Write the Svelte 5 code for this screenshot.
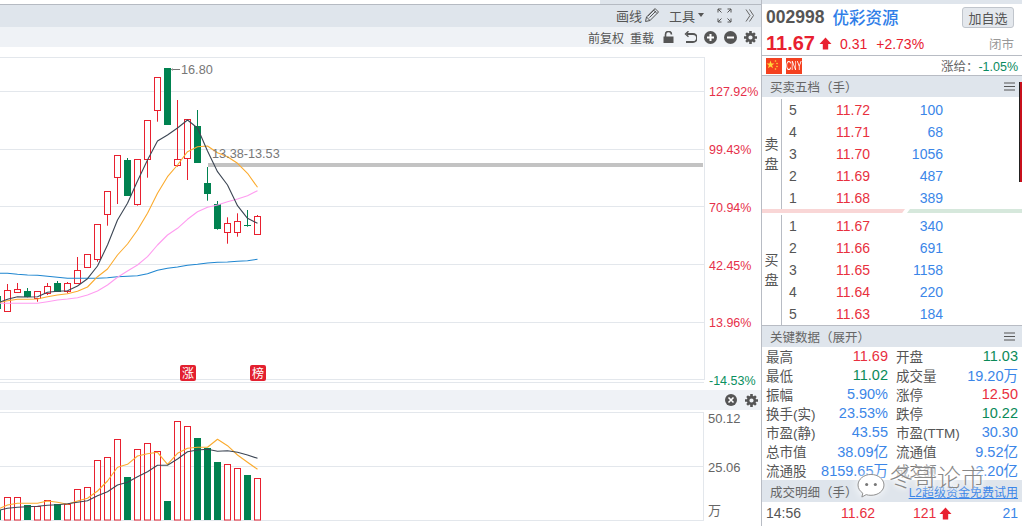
<script>
  const xAt = (i) => 7.5 + 10 * i;
  // keeps 1px outlines on whole pixels
  const snap = (y) => Math.floor(y) + 0.5;

  // open/close as body top+bottom, wick top+bottom; up candles are hollow red
  const candles = [
    [0, 290.3, 311.3, 284, 311.3], [0, 289.3, 292.7, 283, 292.7], [1, 291, 297.3, 288, 297.3],
    [0, 291.3, 298.7, 291.3, 301.7], [0, 286.3, 293.3, 283, 295], [1, 283, 291.7, 281, 291.7],
    [0, 283.3, 291.3, 282, 293.3], [0, 270.3, 283.3, 257, 283.3], [0, 254.3, 267.3, 254.3, 267.3],
    [0, 224.3, 259.3, 224.3, 261.7], [0, 191.3, 214.3, 191.3, 225.7], [0, 155.3, 177.3, 155.3, 204],
    [1, 160, 195.7, 158, 195.7], [0, 159.3, 204.3, 159.3, 205.7], [0, 120.3, 159.3, 120.3, 177.7],
    [0, 77.3, 110.3, 77.3, 121.7], [1, 68, 125, 68, 125], [0, 159.3, 165.3, 100, 166.7],
    [0, 119.3, 158.3, 119.3, 180], [1, 126, 162.7, 110, 162.7], [1, 183, 193.7, 167, 200.7],
    [1, 204.3, 229.7, 201, 229.7], [0, 223.3, 232.3, 217.3, 243.7], [0, 221.3, 232.3, 213.3, 236.7],
    [1, 225, 226, 210, 226.7], [0, 216.3, 234.3, 215, 234.3],
  ];

  const ma5 = [299.3, 296.7, 297, 296.7, 292.3, 291.3, 290.7, 286, 278.7, 266, 245, 220, 203.3, 181, 160, 141, 135, 128, 120, 128, 151, 171.7, 185, 205.7, 218.3, 223.3];
  const ma10 = [300.7, 299.3, 299.3, 299, 296.7, 295, 293.7, 291.3, 287, 276.7, 269, 255, 244, 230, 213.3, 193.3, 176.7, 165, 151.7, 146.7, 146, 152.7, 156.7, 163.3, 173.3, 187.3];
  const ma20 = [303.3, 303.3, 303.3, 303.3, 301.7, 300, 299, 297.7, 295, 291, 285, 277.3, 271, 265, 256.7, 245, 235, 228.3, 219.3, 211.7, 207.3, 205, 201.7, 199, 195.7, 190.7];
  const ma60 = [273.3, 274.3, 275, 275.3, 276.3, 277.3, 278.3, 278.3, 278.3, 278.3, 277.7, 276.7, 276.3, 275.7, 273.7, 270.3, 268.3, 267, 265.3, 264.3, 263, 262.3, 262, 261.3, 260.7, 259.3];

  const bars = [
    [0, 497.3], [0, 497.3], [1, 505], [0, 506.7], [0, 500.3], [1, 504], [0, 504], [0, 489.3], [0, 487.3],
    [0, 460.3], [0, 457.3], [0, 439.3], [1, 477], [0, 449.3], [0, 443.3], [0, 451.3], [1, 501], [0, 421.3],
    [0, 426.3], [1, 438], [1, 448], [1, 462], [0, 464.3], [0, 468.3], [1, 475], [0, 478.3],
  ];
  const volShort = [508.3, 505, 503.3, 503.3, 503.3, 501, 502.3, 504.3, 501, 498.3, 491, 481, 467.3, 464.3, 456, 453.7, 452.3, 464.3, 453.3, 448.3, 447.3, 447.3, 439.3, 445.7, 455, 462.3, 469.3];
  const volLong = [510, 508.3, 507.3, 506.7, 506.3, 505.3, 504.7, 503.7, 502.3, 500.7, 495.7, 491.7, 485, 482.3, 476.7, 471.7, 465.3, 465.3, 459, 451.7, 450, 449.3, 451.3, 450.7, 452.3, 455, 458.3];

  function line(ys) {
    return ys.map((y, i) => `${xAt(i)},${y}`).join(" ");
  }
  // start the lines at the left edge of the chart
  const trend = (ys, first) => `0,${first} ` + line(ys);

  const percents = [
    { y: 96, text: "127.92%" }, { y: 154, text: "99.43%" }, { y: 212, text: "70.94%" },
    { y: 270, text: "42.45%" }, { y: 327, text: "13.96%" },
  ];
  const gridY = [57.5, 91.5, 149.5, 206.5, 264.5, 322.5, 379.5, 382.5];

  const sells = [
    [5, "11.72", 100], [4, "11.71", 68], [3, "11.70", 1056], [2, "11.69", 487], [1, "11.68", 389],
  ];
  const buys = [
    [1, "11.67", 340], [2, "11.66", 691], [3, "11.65", 1158], [4, "11.64", 220], [5, "11.63", 184],
  ];

  const keyData = [
    ["最高", "11.69", "red", "开盘", "11.03", "green"],
    ["最低", "11.02", "green", "成交量", "19.20万", "blue"],
    ["振幅", "5.90%", "blue", "涨停", "12.50", "red"],
    ["换手(实)", "23.53%", "blue", "跌停", "10.22", "green"],
    ["市盈(静)", "43.55", "blue", "市盈(TTM)", "30.30", "blue"],
    ["总市值", "38.09亿", "blue", "流通值", "9.52亿", "blue"],
    ["流通股", "8159.65万", "blue", "成交额", "2.20亿", "blue"],
  ];
</script>

{#snippet gear()}
  <svg class="ico" width="13" height="13" viewBox="0 0 13 13">
    <circle cx="6.5" cy="6.5" r="3.4" fill="none" stroke="#555" stroke-width="2.6" />
    <path d="M5.2 0h2.6v2.4H5.2zM5.2 10.6h2.6V13H5.2zM0 5.2h2.4v2.6H0zM10.6 5.2H13v2.6h-2.4z" fill="#555" />
    <path d="M1.2 3l1.8-1.8 1.7 1.7-1.8 1.8zM8.3 10.1l1.8-1.8 1.7 1.7-1.8 1.8zM10 1.2L11.8 3l-1.7 1.7-1.8-1.8zM3 8.3l1.7 1.8L3 11.8 1.2 10z" fill="#555" />
  </svg>
{/snippet}

{#snippet menu()}
  <svg class="menu" width="11" height="9" viewBox="0 0 11 9">
    <path d="M0 1h11M0 4.5h11M0 8h11" stroke="#555" stroke-width="1" fill="none" />
  </svg>
{/snippet}

{#snippet upArrow(color)}
  <svg width="13" height="13" viewBox="0 0 13 13"><path d="M6.5 0.5L12.5 7H9.2v5.5H3.8V7H.5z" fill={color} /></svg>
{/snippet}

<div class="page">
  <div class="left">
    <div class="top-strip"><i class="tab"></i></div>
    <div class="toolbar">
      <span>画线</span>
      <svg class="pencil" width="16" height="16" viewBox="0 0 16 16" fill="none" stroke="#555" stroke-width="1">
        <path d="M1.5 14.5l1-4.5L11 1.5l3.5 3.5L6 13.5zM2.5 10l3.5 3.5M9.5 3l3.5 3.5M4 9l6.5-6.5M5.5 10.5L12 4" />
      </svg>
      <span class="tool-label">工具</span>
      <i class="caret"></i>
      <svg class="full" width="15" height="15" viewBox="0 0 15 15" fill="none" stroke="#555" stroke-width="1">
        <path d="M1 4.5V1h3.5M1 1l3.5 3.5M14 4.5V1h-3.5M14 1l-3.5 3.5M1 10.5V14h3.5M1 14l3.5-3.5M14 10.5V14h-3.5M14 14l-3.5-3.5" />
      </svg>
      <svg class="chev" width="10" height="13" viewBox="0 0 10 13" fill="none" stroke="#666" stroke-width="1">
        <path d="M1 .5l4 6-4 6M4.5 .5l4 6-4 6" />
      </svg>
    </div>
    <div class="subbar">
      <span>前复权</span>
      <span class="reload">重载</span>
      <svg class="lock" width="11" height="12" viewBox="0 0 11 12">
        <path d="M2.5 6V3.5a3 3 0 0 1 6 0" fill="none" stroke="#555" stroke-width="1.6" />
        <path d="M.5 5.5h10V12H.5z" fill="#555" />
      </svg>
      <svg class="undo" width="13" height="12" viewBox="0 0 13 12" fill="none" stroke="#555" stroke-width="1.8">
        <path d="M3 3h6a3.5 3.5 0 0 1 0 8H2" />
        <path d="M4.5 .2L1.5 3l3 2.8" stroke-width="1.4" />
      </svg>
      <svg class="round" width="13" height="13" viewBox="0 0 13 13">
        <circle cx="6.5" cy="6.5" r="6.5" fill="#555" />
        <path d="M3 6.5h7M6.5 3v7" stroke="#fff" stroke-width="2" />
      </svg>
      <svg class="round" width="13" height="13" viewBox="0 0 13 13">
        <circle cx="6.5" cy="6.5" r="6.5" fill="#555" />
        <path d="M3 6.5h7" stroke="#fff" stroke-width="2" />
      </svg>
      <span class="gear-slot">{@render gear()}</span>
    </div>

    <svg class="chart" width="761" height="479" viewBox="0 47 761 479">
      <g stroke="#e3e7ec" stroke-width="1">
        {#each gridY as y}
          <line x1="0" x2="704" y1={y} y2={y} />
        {/each}
        <line x1="704.5" x2="704.5" y1="57" y2="380" />
        <line x1="0" x2="704" y1="412.5" y2="412.5" />
        <line x1="0" x2="704" y1="466.5" y2="466.5" />
        <line x1="0" x2="704" y1="520.5" y2="520.5" />
        <line x1="703.5" x2="703.5" y1="412" y2="521" />
      </g>

      <rect x="208" y="163" width="495" height="4" fill="#c3c3c3" />

      <rect x="0" y="296" width="1" height="13" fill="#008250" />
      {#each candles as [down, top, bottom, wickTop, wickBottom], i}
        {#if down}
          <line x1={xAt(i)} x2={xAt(i)} y1={wickTop} y2={wickBottom} stroke="#008250" />
          <rect x={xAt(i) - 3.5} y={Math.round(top)} width="7" height={Math.max(1, Math.round(bottom - top))} fill="#008250" />
        {:else}
          <line x1={xAt(i)} x2={xAt(i)} y1={wickTop} y2={top} stroke="#e8202f" />
          <line x1={xAt(i)} x2={xAt(i)} y1={bottom} y2={wickBottom} stroke="#e8202f" />
          <rect x={xAt(i) - 3} y={snap(top)} width="6" height={Math.round(bottom - top)} fill="#fff" stroke="#e8202f" />
        {/if}
      {/each}

      <polyline class="ma" points={trend(ma60, 273.3)} stroke="#1f86d0" />
      <polyline class="ma" points={trend(ma20, 303.3)} stroke="#ff9cf0" />
      <polyline class="ma" points={trend(ma10, 302.3)} stroke="#fbab2e" />
      <polyline class="ma" points={trend(ma5, 302)} stroke="#3c4654" />

      <path d="M171 69.5h9" stroke="#777" stroke-width="1" />
      <path d="M171 69.5l2-1.5v3z" fill="#999" />
      <text class="note" x="181" y="74">16.80</text>
      <text class="note" x="212" y="158">13.38-13.53</text>

      <rect class="tag" x="180" y="365" width="16" height="16" rx="2" />
      <text class="tag-text" x="188" y="377.5">涨</text>
      <rect class="tag" x="250" y="365" width="16" height="16" rx="2" />
      <text class="tag-text" x="258" y="377.5">榜</text>

      {#each percents as p}
        <text class="axis up" x="709" y={p.y}>{p.text}</text>
      {/each}
      <text class="axis down" x="709" y="385">-14.53%</text>

      <!-- volume band -->
      <rect x="0" y="390" width="761" height="20" fill="#eff2f6" />
      <circle cx="731" cy="400" r="6" fill="#555" />
      <path d="M728.5 397.5l5 5M733.5 397.5l-5 5" stroke="#fff" stroke-width="1.6" />
      <g transform="translate(745 394)">
        <circle cx="6.5" cy="6.5" r="3.4" fill="none" stroke="#555" stroke-width="2.6" />
        <path d="M5.2 0h2.6v2.4H5.2zM5.2 10.6h2.6V13H5.2zM0 5.2h2.4v2.6H0zM10.6 5.2H13v2.6h-2.4z" fill="#555" />
        <path d="M1.2 3l1.8-1.8 1.7 1.7-1.8 1.8zM8.3 10.1l1.8-1.8 1.7 1.7-1.8 1.8zM10 1.2L11.8 3l-1.7 1.7-1.8-1.8zM3 8.3l1.7 1.8L3 11.8 1.2 10z" fill="#555" />
      </g>

      <rect x="0" y="510" width="1" height="10" fill="#008250" />
      {#each bars as [down, top], i}
        {#if down}
          <rect x={xAt(i) - 3.5} y={Math.round(top)} width="7" height={520 - Math.round(top)} fill="#008250" />
        {:else}
          <rect x={xAt(i) - 3} y={snap(top)} width="6" height={520 - snap(top)} fill="#fff" stroke="#e8202f" />
        {/if}
      {/each}
      <polyline class="ma" points={trend(volShort.slice(1), volShort[0])} stroke="#fbab2e" />
      <polyline class="ma" points={trend(volLong.slice(1), volLong[0])} stroke="#3c4654" />

      <text class="axis plain" x="708" y="423">50.12</text>
      <text class="axis plain" x="708" y="472">25.06</text>
      <text class="axis plain" x="708" y="515">万</text>
    </svg>
  </div>

  <aside class="side">
    <div class="side-strip"></div>
    <div class="title-row">
      <span class="code">002998</span>
      <span class="name">优彩资源</span>
      <button class="add">加自选</button>
    </div>
    <div class="price-row">
      <span class="price">11.67</span>
      <span class="arrow">{@render upArrow("#e8202f")}</span>
      <span class="change">0.31</span>
      <span class="pct">+2.73%</span>
      <span class="closed">闭市</span>
    </div>
    <div class="tag-row">
      <svg class="flag" width="16" height="16" viewBox="0 0 16 16">
        <rect width="16" height="16" fill="#f4401f" />
        <path d="M4.5 2.5l1 3h3L6.100 7.300l.9 3-2.500-1.800-2.500 1.800.9-3L.5 5.500h3z" fill="#ffd83a" />
        <circle cx="9.5" cy="3" r=".8" fill="#ffd83a" />
        <circle cx="11" cy="5.5" r=".8" fill="#ffd83a" />
        <circle cx="11" cy="8.5" r=".8" fill="#ffd83a" />
        <circle cx="9.5" cy="11" r=".8" fill="#ffd83a" />
      </svg>
      <span class="cny"><span>CNY</span></span>
      <span class="rate">涨给：<b>-1.05%</b></span>
    </div>

    <div class="sec-head">买卖五档（手）{@render menu()}</div>
    <div class="book">
      <div class="book-side">卖<br />盘</div>
      <div class="rows">
        {#each sells as [n, price, vol]}
          <div class="row"><span class="n">{n}</span><span class="p">{price}</span><span class="v">{vol}</span></div>
        {/each}
      </div>
    </div>
    <div class="split"><i class="pink"></i><i class="mint"></i></div>
    <div class="book last">
      <div class="book-side">买<br />盘</div>
      <div class="rows">
        {#each buys as [n, price, vol]}
          <div class="row"><span class="n">{n}</span><span class="p">{price}</span><span class="v">{vol}</span></div>
        {/each}
      </div>
    </div>

    <div class="sec-head">关键数据（展开）{@render menu()}</div>
    <div class="key">
      {#each keyData as [l1, v1, c1, l2, v2, c2]}
        <span class="k">{l1}</span><span class="val {c1}">{v1}</span>
        <span class="k second">{l2}</span><span class="val {c2}">{v2}</span>
      {/each}
    </div>

    <div class="sec-head detail">成交明细（手）<a href="#l2">L2超级资金免费试用</a></div>
    <div class="trade">
      <span class="time">14:56</span>
      <span class="tp">11.62</span>
      <span class="tv">121</span>
      {@render upArrow("#e8202f")}
      <span class="tc">21</span>
    </div>

    <i class="gauge"></i>

    <div class="watermark">
      <svg width="30" height="25" viewBox="0 0 30 26">
        <path d="M15 1.5C7.5 1.5 1.5 6.5 1.5 12.5c0 3.5 2 6.5 5 8.5l-1 4 4.5-2.5c1.500.5 3 .7 5 .7 7.500 0 13.500-4.700 13.500-10.700S22.500 1.500 15 1.500z" fill="#fff" stroke="#8a8a8a" stroke-width="1" />
        <circle cx="10.5" cy="12" r="1.6" fill="#777" />
        <circle cx="19.5" cy="12" r="1.6" fill="#777" />
      </svg>
      <span>冬哥论市</span>
    </div>
  </aside>
</div>

<style>
  :global(body) {
    background: #fff;
    overflow: hidden;
  }

  .page {
    display: flex;
    width: 1022px;
    height: 526px;
    overflow: hidden;
    position: relative;
    font-family: "Liberation Sans", "Noto Sans CJK SC", sans-serif;
    color: #555;
  }

  .left {
    width: 761px;
    flex: none;
  }

  .top-strip {
    height: 4px;
    background: #dfe5ec;
    border-bottom: 1px solid #b5bac2;
  }

  .tab {
    display: block;
    width: 600px;
    height: 4px;
    background: #fff;
  }

  .toolbar {
    height: 22px;
    background: #dfe5ec;
    display: flex;
    align-items: center;
    justify-content: flex-end;
    font-size: 13px;
    padding-right: 6px;
    padding-bottom: 2px;
    box-sizing: border-box;
  }

  .pencil {
    margin-left: 2px;
  }

  .tool-label {
    margin-left: 9px;
  }

  .caret {
    width: 0;
    height: 0;
    margin-left: 3px;
    border-left: 3.5px solid transparent;
    border-right: 3.5px solid transparent;
    border-top: 4px solid #555;
  }

  .full {
    margin-left: 13px;
  }

  .chev {
    margin-left: 13px;
  }

  .subbar {
    height: 20px;
    background: #eff2f6;
    display: flex;
    align-items: center;
    justify-content: flex-end;
    font-size: 12px;
    padding-right: 4px;
    box-sizing: border-box;
  }

  .reload {
    margin-left: 6px;
  }

  .lock {
    margin-left: 9px;
  }

  .undo {
    margin-left: 10px;
  }

  .round {
    margin-left: 7px;
  }

  .gear-slot {
    margin-left: 7px;
    display: flex;
  }

  .chart {
    display: block;
  }

  .ma {
    fill: none;
    stroke-width: 1.1;
    stroke-linejoin: round;
  }

  .note {
    font-size: 12.7px;
    fill: #777;
  }

  .tag {
    fill: #e3202f;
  }

  .tag-text {
    font-size: 12px;
    fill: #fff;
    text-anchor: middle;
  }

  .axis {
    font-size: 12.5px;
  }

  .up {
    fill: #e6304a;
  }

  .down {
    fill: #0a9060;
  }

  .plain {
    fill: #666;
    font-size: 13px;
  }

  .side {
    flex: 1;
    border-left: 1px solid #b8bcc4;
    min-width: 0;
  }

  .side-strip {
    height: 4px;
    background: #dfe5ec;
  }

  .title-row {
    height: 28px;
    display: flex;
    align-items: center;
    padding: 0 8px 2px 4px;
    box-sizing: border-box;
  }

  .code {
    font-size: 17.5px;
    font-weight: 700;
    color: #555;
  }

  .name {
    font-size: 16.5px;
    font-weight: 500;
    color: #2f7ee8;
    margin-left: 8px;
  }

  .add {
    margin-left: auto;
    width: 52px;
    height: 21px;
    padding: 0;
    background: #e4e8ed;
    border: 1px solid #c0c5cc;
    border-radius: 3px;
    font: inherit;
    font-size: 13px;
    color: #555;
  }

  .price-row {
    height: 23px;
    display: flex;
    align-items: center;
    padding: 0 8px 0 4px;
    border-bottom: 1px solid #b8bcc4;
    color: #e8202f;
    font-size: 14px;
  }

  .price {
    font-size: 20px;
    font-weight: 700;
  }

  .arrow {
    display: flex;
    margin-left: 4px;
  }

  .change {
    margin-left: 8px;
  }

  .pct {
    margin-left: 9px;
  }

  .closed {
    margin-left: auto;
    font-size: 12.5px;
    color: #999;
  }

  .tag-row {
    height: 19px;
    display: flex;
    align-items: center;
    padding: 0 4px;
    border-bottom: 1px solid #b8bcc4;
  }

  .cny {
    width: 16px;
    height: 16px;
    margin-left: 4px;
    background: #f4401f;
    color: #fff;
    font-size: 12px;
    line-height: 16px;
    white-space: nowrap;
  }

  .cny span {
    display: block;
    width: 26px;
    transform: scaleX(0.62);
    transform-origin: 0 0;
  }

  .rate {
    margin-left: auto;
    font-size: 12.5px;
    color: #666;
  }

  .rate b {
    font-weight: 400;
    color: #0a8a60;
  }

  .sec-head {
    height: 21px;
    background: #dfe5ec;
    display: flex;
    align-items: center;
    padding: 0 7px 0 8px;
    font-size: 12.5px;
    color: #666;
  }

  .menu {
    margin-left: auto;
  }

  .book {
    display: flex;
    height: 110px;
    margin-top: 2px;
  }

  .book.last {
    margin-top: 0;
    border-bottom: 1px solid #b8bcc4;
  }

  .book-side {
    width: 20px;
    flex: none;
    border-right: 1px solid #b8bcc4;
    text-align: center;
    font-size: 14px;
    line-height: 20px;
    padding-top: 35px;
    box-sizing: border-box;
  }

  .rows {
    flex: 1;
  }

  .row {
    height: 22px;
    display: grid;
    grid-template-columns: 54px 48px 65px;
    align-items: center;
    font-size: 14px;
  }

  .n {
    padding-left: 7px;
  }

  .p {
    color: #e8303e;
  }

  .v {
    text-align: right;
    color: #3b86e8;
    margin-right: 6px;
  }

  .split {
    height: 4px;
    display: flex;
    margin-bottom: 2px;
    gap: 2px;
  }

  .pink {
    width: 143px;
    background: #f9d6d6;
    clip-path: polygon(0 0, 100% 0, 98% 100%, 0 100%);
  }

  .mint {
    flex: 1;
    background: #d6e8dc;
    clip-path: polygon(3px 0, 100% 0, 100% 100%, 0 100%);
  }

  .key {
    display: grid;
    grid-template-columns: 44px 78px 50px 80px;
    grid-auto-rows: 19px;
    padding: 0 4px;
    margin: -1px 0 1px;
    font-size: 13.5px;
    align-items: center;
    white-space: nowrap;
  }

  .k {
    color: #555;
  }

  .second {
    padding-left: 8px;
  }

  .val {
    text-align: right;
    font-size: 14.5px;
  }

  .red {
    color: #e8303e;
  }

  .green {
    color: #0a8a58;
  }

  .blue {
    color: #3b86e8;
  }

  .detail {
    padding-right: 4px;
    height: 22px;
  }

  .detail a {
    margin-left: auto;
    font-size: 12px;
    color: #3b86e8;
  }

  .trade {
    display: flex;
    align-items: center;
    height: 22px;
    padding: 0 4px;
    font-size: 14px;
  }

  .time {
    color: #555;
    width: 75px;
  }

  .tp {
    color: #e8303e;
    width: 72px;
  }

  .tv {
    color: #e8303e;
    margin-right: 3px;
  }

  .tc {
    margin-left: auto;
    color: #3b86e8;
  }

  .gauge {
    position: absolute;
    right: 0;
    top: 82px;
    width: 3px;
    height: 100px;
    box-sizing: border-box;
    border-left: 1px solid #222;
    background: #c8101c;
  }

  .watermark {
    position: absolute;
    left: 856px;
    top: 463px;
    display: flex;
    align-items: flex-start;
    gap: 3px;
    color: #888;
    font-size: 24px;
    line-height: 30px;
    font-weight: 300;
    text-shadow: 0 0 3px #fff, 0 0 5px #fff, 0 0 8px #fff, 0 0 10px #fff;
  }

  .watermark svg {
    margin-top: 10px;
    filter: drop-shadow(0 0 4px #fff);
  }
</style>
